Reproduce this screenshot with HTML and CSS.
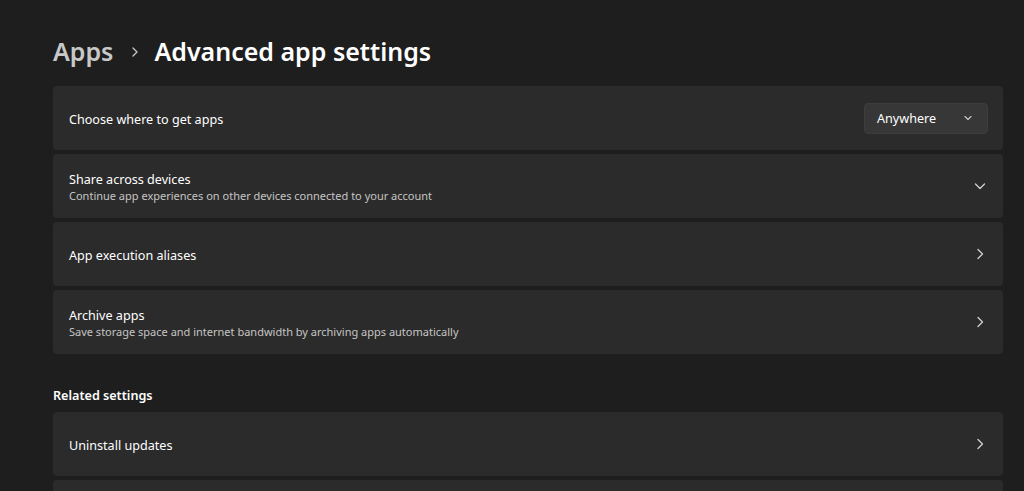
FILE: index.html
```html
<!DOCTYPE html>
<html lang="en">
<head>
  <meta charset="UTF-8">
  <link rel="stylesheet" href="styles.css">
  <title>Advanced app settings</title>
</head>
<body class="page">
  <header class="breadcrumb">
    <span class="breadcrumb__parent">Apps</span>
    <svg class="breadcrumb__sep" width="10" height="12" viewBox="0 0 10 12"><path d="M3 2l4 4-4 4" fill="none" stroke="#c8c8c8" stroke-width="1.3" stroke-linecap="round" stroke-linejoin="round"/></svg>
    <h1 class="breadcrumb__title">Advanced app settings</h1>
  </header>

  <section class="list">
    <div class="card">
      <div class="card__text">
        <p class="card__title">Choose where to get apps</p>
      </div>
      <button class="select">
        Anywhere
        <svg width="10" height="10" viewBox="0 0 10 10"><path d="M2 3.5l3 3 3-3" fill="none" stroke="#c8c8c8" stroke-width="1.1" stroke-linecap="round" stroke-linejoin="round"/></svg>
      </button>
    </div>

    <div class="card">
      <div class="card__text">
        <p class="card__title">Share across devices</p>
        <p class="card__desc">Continue app experiences on other devices connected to your account</p>
      </div>
      <svg class="card__icon" width="16" height="16" viewBox="0 0 16 16"><path d="M3.5 6l4.5 4.5 4.5-4.5" fill="none" stroke="#d0d0d0" stroke-width="1.3" stroke-linecap="round" stroke-linejoin="round"/></svg>
    </div>

    <div class="card">
      <div class="card__text">
        <p class="card__title">App execution aliases</p>
      </div>
      <svg class="card__icon" width="16" height="16" viewBox="0 0 16 16"><path d="M6 3.5l4.5 4.5-4.5 4.5" fill="none" stroke="#d0d0d0" stroke-width="1.3" stroke-linecap="round" stroke-linejoin="round"/></svg>
    </div>

    <div class="card">
      <div class="card__text">
        <p class="card__title">Archive apps</p>
        <p class="card__desc">Save storage space and internet bandwidth by archiving apps automatically</p>
      </div>
      <svg class="card__icon" width="16" height="16" viewBox="0 0 16 16"><path d="M6 3.5l4.5 4.5-4.5 4.5" fill="none" stroke="#d0d0d0" stroke-width="1.3" stroke-linecap="round" stroke-linejoin="round"/></svg>
    </div>
  </section>

  <h2 class="section-title">Related settings</h2>

  <section class="list">
    <div class="card">
      <div class="card__text">
        <p class="card__title">Uninstall updates</p>
      </div>
      <svg class="card__icon" width="16" height="16" viewBox="0 0 16 16"><path d="M6 3.5l4.5 4.5-4.5 4.5" fill="none" stroke="#d0d0d0" stroke-width="1.3" stroke-linecap="round" stroke-linejoin="round"/></svg>
    </div>
    <div class="card"></div>
  </section>
</body>
</html>
```

FILE: styles.css
```css
html, .page {
  margin: 0;
  height: 100%;
  overflow: hidden;
  font-family: 'Noto Sans', 'Open Sans', sans-serif;
  background: #1e1e1e;
  color: #ffffff;
}

* {
  box-sizing: border-box;
}

.page {
  padding: 28px 21px 0 53px;
}

.breadcrumb {
  display: flex;
  align-items: center;
  height: 46px;
  margin-bottom: 12px;
}

.breadcrumb__parent {
  font-size: 25px;
  font-weight: 600;
  color: #c8c8c8;
}

.breadcrumb__sep {
  margin: 2px 14px 0 17px;
}

.breadcrumb__title {
  margin: 0;
  font-size: 25px;
  font-weight: 600;
  color: #ffffff;
}

.list {
  display: flex;
  flex-direction: column;
  gap: 4px;
}

.card {
  display: flex;
  align-items: center;
  justify-content: space-between;
  height: 64px;
  padding: 2px 15px 0 16px;
  background: #2b2b2b;
  border-radius: 4px;
}

.card__text {
  display: flex;
  flex-direction: column;
}

.card__title {
  margin: 0;
  font-size: 12.6px;
  color: #ffffff;
}

.card__desc {
  margin: 0;
  font-size: 11px;
  color: #c5c5c5;
}

.card__icon {
  margin-top: -2px;
}

.select {
  display: flex;
  align-items: center;
  justify-content: space-between;
  width: 124px;
  height: 31px;
  padding: 0 14px 0 12px;
  font-family: inherit;
  font-size: 12.6px;
  color: #ffffff;
  background: #373737;
  border: 1px solid #3d3d3d;
  border-radius: 4px;
  margin-top: -2px;
}

.section-title {
  margin: 33px 0 8px;
  font-size: 12.6px;
  font-weight: 600;
  color: #ffffff;
}
```
